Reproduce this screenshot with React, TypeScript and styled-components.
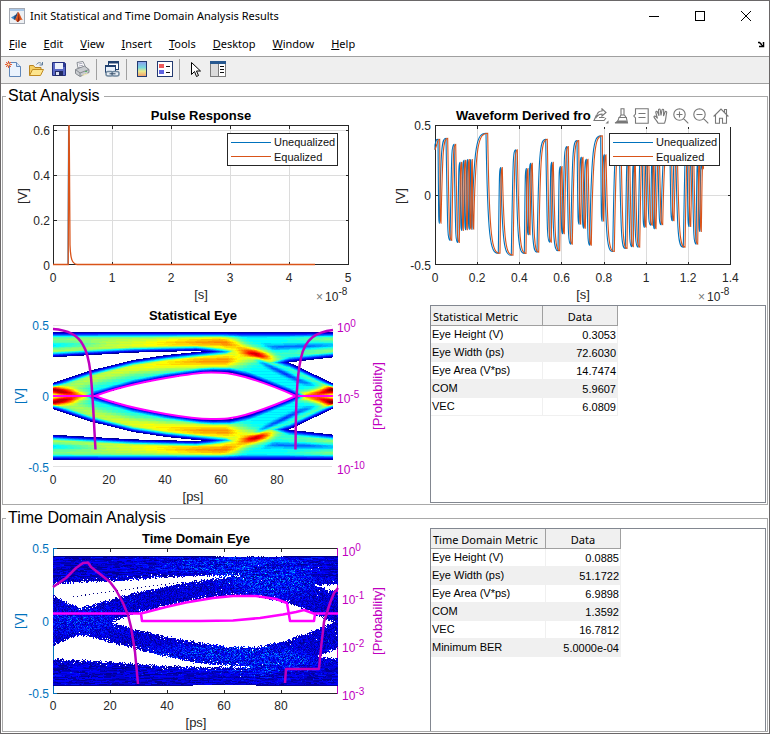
import React, { useMemo } from "react";
import styled, { createGlobalStyle } from "styled-components";

/* ---------- numeric helpers ---------- */

type Point = [number, number];

const lerp = (points: Point[], x: number): number => {
  if (x <= points[0][0]) return points[0][1];
  for (let i = 1; i < points.length; i++) {
    const [x1, y1] = points[i];
    if (x <= x1) {
      const [x0, y0] = points[i - 1];
      return y0 + ((y1 - y0) * (x - x0)) / (x1 - x0);
    }
  }
  return points[points.length - 1][1];
};

const clamp = (v: number) => Math.max(0, Math.min(1, v));

const jet = (v: number): string => {
  const channel = (offset: number) =>
    Math.round(255 * clamp(1.5 - Math.abs(4 * v - offset)));
  return `rgb(${channel(3)},${channel(2)},${channel(1)})`;
};

const createRandom = (seed: number) => () => {
  seed = (seed + 0x6d2b79f5) | 0;
  let t = Math.imul(seed ^ (seed >>> 15), 1 | seed);
  t = (t + Math.imul(t ^ (t >>> 7), 61 | t)) ^ t;
  return ((t ^ (t >>> 14)) >>> 0) / 4294967296;
};

const gauss = (x: number, sigma: number) => Math.exp((-x * x) / (2 * sigma * sigma));

/* A density returns 0..1, or null where the bin is empty. */
type Density = (column: number, row: number) => number | null;

const LEVELS = 48;

const heatPaths = (columns: number, rows: number, density: Density) => {
  const paths: string[] = Array(LEVELS + 1).fill("");
  for (let r = 0; r < rows; r++) {
    let start = 0;
    let level = -1;
    for (let c = 0; c <= columns; c++) {
      const v = c < columns ? density(c, r) : null;
      const next = v === null ? -1 : Math.round(clamp(v) * LEVELS);
      if (next !== level || c === columns) {
        if (level >= 0) paths[level] += `M${start} ${r}h${c - start}v1h${start - c}z`;
        start = c;
        level = next;
      }
    }
  }
  return paths;
};

/* ---------- statistical eye density; profiles are in thirds of a bin ---------- */

const OUTER = 192;
const gapLeftTop: Point[] = [[0, 116], [240, 130], [430, 135], [470, 131], [560, 118], [620, 80], [700, -200]];
const gapLeftBottom: Point[] = [[0, 40], [110, 76], [240, 108], [340, 123], [430, 132], [520, 141], [620, 190], [700, 400]];
const gapRightTop: Point[] = [[520, -300], [640, 82], [710, 101], [840, 116]];
const gapRightBottom: Point[] = [[520, 400], [640, 120], [710, 100], [840, 38]];
const eyeOpening: Point[] = [
  [0, -70], [60, -32], [100, -12], [125, 0], [240, 33], [340, 53], [440, 68], [480, 71],
  [530, 70], [590, 55], [650, 32], [730, 0], [760, -14], [800, -34], [840, -70],
];

interface Band { center: Point[]; amp: Point[]; sigma: number }

const bands: Band[] = [
  {
    center: [[0, 168], [400, 164], [500, 162], [550, 154], [620, 122], [680, 98], [740, 68], [840, 22]],
    amp: [[0, 0.12], [300, 0.2], [420, 0.28], [520, 0.37], [570, 0.2], [620, 0.1], [700, 0.04], [840, 0.12]],
    sigma: 15,
  },
  { center: [[0, 134], [300, 148], [440, 155]], amp: [[0, 0.15], [300, 0.12], [440, 0.06], [520, 0]], sigma: 10 },
  {
    center: [[0, 8], [60, 32], [140, 60], [240, 84], [340, 97], [440, 104], [520, 106], [580, 112], [620, 124], [680, 134], [840, 132]],
    amp: [[0, 0.05], [60, 0.16], [240, 0.22], [340, 0.27], [440, 0.34], [520, 0.36], [570, 0.2], [620, 0.08], [670, 0.03], [840, 0.14]],
    sigma: 17,
  },
  { center: [[640, 175], [840, 172]], amp: [[600, 0], [700, 0.02], [840, 0.12]], sigma: 9 },
  { center: [[600, 116], [660, 84], [740, 46], [780, 34]], amp: [[570, 0], [620, -0.16], [700, -0.2], [760, -0.14], [810, 0]], sigma: 6 },
  { center: [[600, 160], [660, 146], [840, 152]], amp: [[620, 0], [660, -0.14], [760, -0.2], [840, -0.14]], sigma: 6 },
  { center: [[0, 152], [160, 156]], amp: [[0, -0.12], [160, 0]], sigma: 6 },
  { center: [[0, 19], [50, 8], [80, 0]], amp: [[0, 0.54], [40, 0.46], [80, 0.36], [125, 0]], sigma: 10 },
  { center: [[760, 0], [800, 8], [840, 19]], amp: [[715, 0], [760, 0.36], [800, 0.46], [840, 0.54]], sigma: 10 },
];

const STAT_COLUMNS = 280;
const STAT_ROWS = 128;

const statDensity: Density = (column, row) => {
  const u = column * 3 + 1.5;
  const d = Math.abs(OUTER - (row * 3 + 1.5));
  const distance = Math.min(
    OUTER - d,
    d - lerp(eyeOpening, u),
    Math.max(d - lerp(gapLeftTop, u), lerp(gapLeftBottom, u) - d),
    Math.max(d - lerp(gapRightTop, u), lerp(gapRightBottom, u) - d),
  );
  if (distance < 0) return null;
  let v = 0.37 + 0.012 * Math.sin(d * 0.75);
  for (const band of bands) v += lerp(band.amp, u) * gauss(d - lerp(band.center, u), band.sigma);
  v += 0.34 * gauss(u - 615, 34) * gauss(d - 123 + (u - 615) * 0.22, 10);
  return Math.max(0.02, v * clamp(distance / 17));
};

/* ---------- time domain eye density ---------- */

interface Gap { upper: Point[]; lower: Point[]; from: number; to: number }

const timeGaps: Gap[] = [
  {
    from: 0, to: 560,
    upper: [[0, 85], [80, 79], [190, 75], [340, 64], [440, 60], [560, 59]],
    lower: [[0, 119], [80, 157], [140, 139], [240, 112], [340, 90], [440, 73], [560, 59]],
  },
  {
    from: 0, to: 590,
    upper: [[0, 269], [80, 236], [140, 250], [240, 277], [340, 302], [440, 323], [590, 333]],
    lower: [[0, 309], [80, 312], [240, 323], [340, 330], [460, 334], [590, 332]],
  },
  {
    from: 175, to: 845,
    upper: [[175, 199], [220, 182], [270, 167], [340, 149], [440, 129], [540, 119], [610, 121], [700, 140], [760, 162], [800, 182], [845, 199]],
    lower: [[175, 199], [240, 219], [340, 242], [440, 260], [540, 273], [610, 274], [690, 257], [760, 232], [845, 199]],
  },
  { from: 785, to: 856, upper: [[785, 88], [856, 85]], lower: [[785, 88], [856, 110]] },
  { from: 795, to: 856, upper: [[795, 303], [856, 276]], lower: [[795, 303], [856, 309]] },
];

const hotSpots: [number, number, number, number][] = [
  [470, 28, 120, 18], [710, 70, 50, 22], [70, 197, 80, 26], [710, 315, 50, 16],
  [620, 35, 100, 26], [640, 90, 80, 30], [470, 290, 140, 20], [600, 320, 80, 30],
];

const TIME_COLUMNS = 285;
const TIME_ROWS = 130;

const createTimeDensity = (): Density => {
  const random = createRandom(41);
  let streak = 0;
  return (column, row) => {
    const u = column * 3 + 1.5;
    const y = row * 3 + 1.5;
    const jitter = (random() - 0.5) * 7;
    const speck = random();
    for (const gap of timeGaps) {
      if (u < gap.from || u > gap.to) continue;
      const inside = Math.min(y - lerp(gap.upper, u), lerp(gap.lower, u) - y) + jitter;
      if (inside > 0) {
        const trackY = 122 - ((u - 60) * 35) / 260;
        const onTrack = u > 55 && u < 380 && Math.abs(y - trackY) < 1.6 && column % 4 === 0;
        return onTrack ? 0.01 : null;
      }
      if (inside > -9 && speck > 0.93) return null;
    }
    if (y < 4) return u > 490 && u < 690 && speck > 0.2 ? null : 0.01;
    if (y > 386) return u > 420 && u < 610 ? null : 0.02;
    if (speck > 0.998 && u > 500) return null;
    const outerBand = y < 64 || y > 326;
    if (!outerBand || random() > 0.72) streak = random();
    let heat = 0;
    for (const [hx, hy, sx, sy] of hotSpots) heat += gauss(u - hx, sx) * gauss(y - hy, sy);
    const bright = random();
    return 0.01 + streak * 0.13 + Math.min(1, heat) * bright * bright * 0.17 + (bright > 0.985 ? 0.07 : 0);
  };
};

/* ---------- waveform: [time position, level] at the end of every bit run ---------- */

const waveRuns: Point[] = [
  [0, 135], [9, 118], [13, 370], [33, 115], [45, 422], [57, 133], [68, 428], [75, 187], [80, 392],
  [87, 181], [92, 390], [98, 179], [103, 388], [107, 179], [111, 388], [153, 100], [190, 460],
  [197, 203], [229, 466], [242, 150], [268, 461], [274, 206], [280, 405], [287, 190], [306, 457],
  [332, 118], [344, 427], [350, 187], [369, 453], [376, 200], [383, 402], [395, 140], [407, 433],
  [426, 122], [432, 373], [439, 172], [446, 385], [454, 178], [464, 436], [497, 108], [501, 364],
  [508, 165], [533, 455], [553, 128], [571, 446], [579, 176], [590, 441], [596, 190], [609, 442],
  [621, 140], [628, 382], [636, 170], [647, 376], [652, 180], [658, 387], [668, 160], [678, 375],
  [704, 120], [712, 363], [722, 150], [745, 442], [756, 150], [762, 380], [771, 160], [783, 433],
  [789, 185], [794, 395], [800, 190], [801, 208],
];

const wavePath = (delay: number): string => {
  const px = (x: number) => ((x + delay) / 3).toFixed(1);
  const py = (y: number) => ((y - 77) / 3).toFixed(1);
  let d = `M0 ${py(150)}L${px(0)} ${py(waveRuns[0][1])}`;
  for (let i = 1; i < waveRuns.length; i++) {
    const [x0, y0] = waveRuns[i - 1];
    const [x1, y1] = waveRuns[i];
    const run = x1 - x0;
    d += `C${px(x0 + Math.min(run * 0.5, 5))} ${py(y0 + (y1 - y0) * 0.9)} ${px(x0 + run * 0.35)} ${py(y1)} ${px(x1)} ${py(y1)}`;
  }
  return d;
};

/* ---------- page frame ---------- */

const GlobalStyle = createGlobalStyle`
  *, *::before, *::after { box-sizing: border-box; }
  body { margin: 0; background: #fff; font-family: "Liberation Sans", Arial, sans-serif; color: #000; }
  button { font: inherit; color: inherit; border: 0; background: none; padding: 0; }
`;

const uiFont = `"Noto Sans", "Open Sans", sans-serif`;

const WindowFrame = styled.div`
  display: flex;
  flex-direction: column;
  min-height: 100vh;
  background: #fff;
  border: 1px solid #6a6768;
`;

const TitleBar = styled.header`
  display: flex;
  align-items: center;
  height: 30px;
  padding-left: 8px;
`;

const WindowTitle = styled.h1`
  flex: 1;
  margin: 0 0 0 5px;
  font: 400 11px/16px ${uiFont};
`;

const CaptionButton = styled.button`
  display: grid;
  place-items: center;
  width: 46px;
  height: 30px;
`;

const MenuBar = styled.nav`
  display: flex;
  align-items: center;
  gap: 1px;
  height: 25px;
  padding: 0 4px 0 0;
`;

const MenuItem = styled.button`
  padding: 0 8px;
  font: 400 11px/16px ${uiFont};
  &::first-letter { text-decoration: underline; }
`;

const DockButton = styled.button`
  display: grid;
  margin-left: auto;
`;

const ToolBar = styled.div`
  display: flex;
  align-items: center;
  height: 28px;
  padding-bottom: 2px;
  border-top: 1px solid #a0a0a0;
  border-bottom: 1px solid #a0a0a0;
  background: #efefef;
`;

const ToolButton = styled.button`
  display: grid;
  place-items: center;
  width: 23px;
  height: 22px;
`;

const ToolDivider = styled.span`
  width: 1px;
  height: 21px;
  margin: 0 3px;
  background: #a0a0a0;
`;

const Panels = styled.main`
  display: flex;
  flex-direction: column;
  gap: 4px;
  padding: 3px 1px 1px;
`;

const Panel = styled.fieldset`
  min-width: 0;
  margin: 0;
  padding: 0;
  border: 1px solid #a9a9a9;
`;

const PanelTitle = styled.legend`
  margin-left: 3px;
  padding: 0 4px 0 2px;
  font-size: 16px;
  line-height: 18px;
`;

const PanelRow = styled.div`
  display: flex;
`;

const Cell = styled.div<{ $share: number }>`
  position: relative;
  flex: ${(p) => p.$share} 1 0;
  min-width: 0;
`;

const ChartSvg = styled.svg`
  display: block;
  width: 100%;
  height: auto;
  font-family: "Liberation Sans", Arial, sans-serif;
`;

const Title = styled.text`
  font-size: 13px;
  font-weight: 700;
  fill: #000;
`;

const Tick = styled.text`
  font-size: 12px;
`;

const Label = styled.text`
  font-size: 13px;
  text-anchor: middle;
`;

const Exponent = styled.tspan`
  font-size: 10px;
`;

const LegendText = styled.text`
  font-size: 11px;
  fill: #111;
`;

const AxesTools = styled.div`
  position: absolute;
  top: 0;
  right: 36px;
  display: flex;
  height: 22px;
  background: #fff;
`;

const AxesButton = styled.button`
  display: grid;
  place-items: center;
  width: 20px;
  height: 22px;
`;

const TableFrame = styled.div<{ $open?: boolean }>`
  height: ${(p) => (p.$open ? "calc(100% - 1px)" : "calc(100% - 3px)")};
  margin: ${(p) => (p.$open ? "1px 1px 0 0" : "2px 1px 1px 0")};
  border: 1px solid #828790;
  border-bottom-width: ${(p) => (p.$open ? 0 : 1)}px;
`;

const MetricTable = styled.table`
  border-collapse: separate;
  border-spacing: 0;
  table-layout: fixed;
  font-size: 11px;
`;

const HeadCell = styled.th<{ $width: number; $center?: boolean }>`
  width: ${(p) => p.$width}px;
  height: 20px;
  padding: 2px 2px 0;
  border-right: 1px solid #a0a0a0;
  border-bottom: 1px solid #a0a0a0;
  background: #f0f0f0;
  font: 400 11px/16px ${uiFont};
  text-align: ${(p) => (p.$center ? "center" : "left")};
  white-space: nowrap;
`;

const BodyRow = styled.tr`
  height: 18px;
  &:nth-child(even) { background: #f0f0f0; }
`;

const NameCell = styled.th`
  padding: 0 1px 1px;
  border-right: 1px solid #f0f0f0;
  border-bottom: 1px solid #f0f0f0;
  font-weight: 400;
  line-height: 15px;
  text-align: left;
`;

const ValueCell = styled.td`
  padding: 1px 1px 0;
  border-right: 1px solid #f0f0f0;
  border-bottom: 1px solid #f0f0f0;
  line-height: 16px;
  text-align: right;
`;

/* ---------- icons ---------- */

const Icon = ({ size = 16, children }: { size?: number; children: React.ReactNode }) => (
  <svg width={size} height={size} viewBox={`0 0 ${size} ${size}`} fill="none" aria-hidden="true">
    {children}
  </svg>
);

const MatlabIcon = () => (
  <Icon>
    <rect x=".5" y=".5" width="15" height="15" fill="#eef0f3" stroke="#a5aab3" />
    <rect x="1" y="1" width="14" height="2" fill="#a9c7e8" />
    <path d="M2 9.500l3.500-2 2 2.500-2 2z" fill="#3b86c8" />
    <path d="M5.500 7.500C7.500 7 8 4 9 4c-.5 3-1 5-3.500 8L5 10z" fill="#274a78" />
    <path d="M9 4c1.500 0 2.500 5.500 5 8-1.500-.5-2.500-.5-3.500.5-1 1-1.500 1.500-2.500 1.500-.5-1.500-1.500-2-2.500-2C8 10 8 6 9 4z" fill="#d9541c" />
    <path d="M9 4c.8 2 .5 6-1 10 1 0 1.500-.5 2.500-1.500C10.500 9 10 6 9 4z" fill="#8c2312" />
  </Icon>
);

const NewIcon = () => (
  <Icon>
    <path d="M4.500 1.500h7l4 4v10h-11z" fill="#eaf3fd" stroke="#5f86b8" />
    <path d="M11.500 1.500v4h4" fill="#cfe0f5" stroke="#5f86b8" />
    <path d="M3.500 0v7M0 3.500h7M1 1l5 5M6 1L1 6" stroke="#e8663c" />
    <circle cx="3.500" cy="3.500" r="1.600" fill="#fff2b0" stroke="#d6452a" />
  </Icon>
);

const OpenIcon = () => (
  <Icon>
    <path d="M1.500 14.500v-10h4l1.500 2h6v3" fill="#f6cf63" stroke="#b98420" />
    <path d="M1.500 14.500l3-6h11l-3 6z" fill="#fde58d" stroke="#c08a22" />
    <path d="M8.500 3.500c2-2.500 4-2.500 5.500 0M14.500 1v3h-3" stroke="#5f7d9c" />
  </Icon>
);

const SaveIcon = () => (
  <Icon>
    <path d="M1.500 1.500h12l1 1v12h-13z" fill="#5a68c4" stroke="#232f80" />
    <rect x="4" y="2" width="8" height="6" fill="#eef2fb" />
    <path d="M12 2h2v4h-2z" fill="#2d3b96" />
    <rect x="4" y="10" width="8" height="5" fill="#222b63" />
    <rect x="5" y="11" width="3" height="3" fill="#dfe3f2" />
  </Icon>
);

const PrintIcon = () => (
  <Icon>
    <path d="M4 7L3 1.500 9 .5 11.500 6z" fill="#fff" stroke="#8a8f96" />
    <path d="M4.500 3l4-.8M5 5l4-.8" stroke="#aab" />
    <path d="M1.500 8.500l9-3.500 4.500 3.500v3L6 15.500l-4.500-3z" fill="#c9ccd0" stroke="#85898f" />
    <path d="M1.500 8.500L6 12l9-3.500M6 12v3" stroke="#85898f" />
    <path d="M8 14l5-2 1 1-5 2z" fill="#f1e9b8" />
    <rect x="11" y="10" width="2" height="1" fill="#58b368" />
  </Icon>
);

const LinkPlotIcon = () => (
  <Icon>
    <rect x="4.500" y=".5" width="10" height="8" fill="#fff" stroke="#20406f" />
    <path d="M4 1.500h11" stroke="#20406f" strokeWidth="2" />
    <rect x="1.500" y="4.500" width="10" height="7" fill="#e8f0fa" stroke="#20406f" />
    <path d="M1 5h11" stroke="#20406f" strokeWidth="2" />
    <rect x="2" y="10.500" width="7" height="4.500" rx="2" fill="#e6edf5" stroke="#6f879d" strokeWidth="1.500" />
    <rect x="8" y="10.500" width="7" height="4.500" rx="2" fill="#e6edf5" stroke="#6f879d" strokeWidth="1.500" />
    <path d="M5.500 12.800h6" stroke="#2c4560" />
  </Icon>
);

const ColorbarIcon = () => (
  <Icon>
    <defs>
      <linearGradient id="colorbar" x2="0" y2="1">
        <stop offset="0" stopColor="#8c9cf0" />
        <stop offset=".4" stopColor="#79d9dc" />
        <stop offset=".65" stopColor="#e9ea8c" />
        <stop offset="1" stopColor="#f29a6c" />
      </linearGradient>
    </defs>
    <rect x="3.500" y=".5" width="9" height="15" fill="url(#colorbar)" stroke="#233a70" />
  </Icon>
);

const LegendIcon = () => (
  <Icon>
    <rect x=".5" y=".5" width="15" height="15" fill="#fff" stroke="#233a70" />
    <rect x="2" y="3" width="5" height="4" fill="#ee5a5a" />
    <rect x="2" y="9" width="5" height="4" fill="#5f63e0" />
    <path d="M9 5.500h4M9 11.500h4" stroke="#111" />
  </Icon>
);

const PointerIcon = () => (
  <Icon>
    <path d="M4.500 1.500v12l3-3 2 5 2-1-2-4.500h4z" fill="#fff" stroke="#000" />
  </Icon>
);

const InspectorIcon = () => (
  <Icon>
    <rect x=".5" y=".5" width="15" height="15" fill="#dcdcdc" stroke="#7c7c7c" />
    <rect x="0" y="0" width="16" height="3" fill="#27588f" />
    <rect x="9" y="3" width="6" height="12" fill="#fff" />
    <path d="M8.500 3v12" stroke="#7c7c7c" />
    <path d="M10 5.500h4M10 8.500h4M10 11.500h4" stroke="#111" />
  </Icon>
);

const tools: { name: string; icon: React.ReactNode; divider?: boolean }[] = [
  { name: "New Figure", icon: <NewIcon /> },
  { name: "Open File", icon: <OpenIcon /> },
  { name: "Save Figure", icon: <SaveIcon /> },
  { name: "Print Figure", icon: <PrintIcon />, divider: true },
  { name: "Link Plot", icon: <LinkPlotIcon />, divider: true },
  { name: "Insert Colorbar", icon: <ColorbarIcon /> },
  { name: "Insert Legend", icon: <LegendIcon />, divider: true },
  { name: "Edit Plot", icon: <PointerIcon /> },
  { name: "Open Property Inspector", icon: <InspectorIcon /> },
];

const axesTools: { name: string; icon: React.ReactNode }[] = [
  {
    name: "Export",
    icon: (
      <>
        <path d="M3.500 7L1 12.500h10L13 10M6 9.500h5.500" />
        <path d="M3.500 9C4 4.500 6.500 3 9 3V.8L13 4.500 9 8V6C7 6 5 7 3.500 9z" />
        <path d="M12.500 15.500h3v-3z" fill="#777" stroke="none" />
      </>
    ),
  },
  {
    name: "Brush",
    icon: (
      <>
        <path d="M8 .8h3V7H8zM8 7L6.500 9.500h6.500L11.500 7" />
        <path d="M6 9.500h7.300L14.500 15H2C4.500 14 5.500 12 6 9.500z" />
        <path d="M5 12.500h8.500L14.500 15H2z" fill="#777" stroke="none" />
      </>
    ),
  },
  { name: "Data Tips", icon: <path d="M2.500.8h12.700v14.500H2.500V10L.8 8l1.700-2zM5.500 5.500h7M5.500 9.500h7" /> },
  {
    name: "Pan",
    icon: (
      <path d="M5 15.300c-.5-2-3.500-4.500-4-6.300-.2-1 1.300-1.300 2-.3L4.500 10.500 2.800 4.500c-.3-1.300 1.200-1.700 1.700-.5L6 7.800 5.500 2c0-1.300 1.600-1.300 1.800 0L8 7.500 9 2c.2-1.200 1.800-1 1.700.2L10.500 8l1.600-4c.5-1.100 1.900-.6 1.600.6-.7 2.400-.7 5.400-1.200 7.400l-1 3.300M5 15.300h6.500" />
    ),
  },
  { name: "Zoom In", icon: <path d="M6.500.8a5.700 5.700 0 100 11.400 5.700 5.700 0 000-11.400zM10.600 10.600l4.700 4.700M3.500 6.500h6M6.500 3.500v6" /> },
  { name: "Zoom Out", icon: <path d="M6.500.8a5.700 5.700 0 100 11.400 5.700 5.700 0 000-11.400zM10.600 10.600l4.700 4.700M3.500 6.500h6" /> },
  { name: "Restore View", icon: <path d="M.6 8.500L8 1l7.400 7.500M2.500 7v8.300h4v-5h3v5h4V7M11.500 4V1.500h2V6" /> },
];

/* ---------- chart parts ---------- */

const INK = "#262626";
const BLUE = "#0072bd";
const ORANGE = "#d95319";
const PURPLE = "#bf00bf";
const MAGENTA = "#ff00ff";

interface FrameProps { x: number; y: number; w: number; h: number; xs: number[]; ys: number[] }

const GridFrame = ({ x, y, w, h, xs, ys }: FrameProps) => (
  <g fill="none" shapeRendering="crispEdges">
    <path
      stroke="#dcdcdc"
      d={xs.map((v) => `M${x + v} ${y}v${h}`).join("") + ys.map((v) => `M${x} ${y + v}h${w}`).join("")}
    />
    <path
      stroke={INK}
      d={
        `M${x} ${y}h${w}v${h}h${-w}z` +
        xs.map((v) => `M${x + v} ${y}v3M${x + v} ${y + h}v-3`).join("") +
        ys.map((v) => `M${x} ${y + v}h3M${x + w} ${y + v}h-3`).join("")
      }
    />
  </g>
);

interface TickSpec { at: number; text: string }

const XTicks = ({ y, items }: { y: number; items: TickSpec[] }) => (
  <g fill={INK} textAnchor="middle">
    {items.map((t) => <Tick key={t.text} x={t.at} y={y}>{t.text}</Tick>)}
  </g>
);

const YTicks = ({ x, items, color = INK }: { x: number; items: TickSpec[]; color?: string }) => (
  <g fill={color} textAnchor="end">
    {items.map((t) => <Tick key={t.text} x={x} y={t.at}>{t.text}</Tick>)}
  </g>
);

const PowerTicks = ({ x, items }: { x: number; items: TickSpec[] }) => (
  <g fill={PURPLE}>
    {items.map((t) => (
      <Tick key={t.text} x={x} y={t.at}>10<Exponent dy={-5}>{t.text}</Exponent></Tick>
    ))}
  </g>
);

const SideLabel = ({ x, y, color = INK, children }: { x: number; y: number; color?: string; children: string }) => (
  <Label transform={`translate(${x} ${y}) rotate(-90)`} fill={color}>{children}</Label>
);

const Scale = ({ x, y }: { x: number; y: number }) => (
  <Tick x={x} y={y} fill={INK}>
    <tspan fill="#777">×</tspan><tspan dx={2}>10</tspan><Exponent dy={-6}>-8</Exponent>
  </Tick>
);

const ChartLegend = ({ x, y }: { x: number; y: number }) => (
  <g transform={`translate(${x} ${y})`}>
    <rect x=".5" y=".5" width="110" height="32" fill="#fff" stroke={INK} shapeRendering="crispEdges" />
    <path d="M4 9.500h40" stroke={BLUE} shapeRendering="crispEdges" />
    <path d="M4 23.500h40" stroke={ORANGE} shapeRendering="crispEdges" />
    <LegendText x="47" y="13">Unequalized</LegendText>
    <LegendText x="47" y="28">Equalized</LegendText>
  </g>
);

const HeatMap = ({ x, y, columns, rows, density }: { x: number; y: number; columns: number; rows: number; density: () => Density }) => {
  const paths = useMemo(() => heatPaths(columns, rows, density()), [columns, rows, density]);
  return (
    <g transform={`translate(${x} ${y})`} shapeRendering="crispEdges">
      {paths.map((d, i) => (d ? <path key={i} d={d} fill={jet(i / LEVELS)} /> : null))}
    </g>
  );
};

const createStatDensity = () => statDensity;

const PulseChart = () => (
  <ChartSvg viewBox="0 0 377 198" role="img" aria-label="Pulse Response">
    <Title x="198" y="15" textAnchor="middle">Pulse Response</Title>
    <GridFrame x={50.5} y={20.5} w={295} h={139} xs={[59, 118, 177, 236]} ys={[5, 50, 95]} />
    <path d="M50 159.500H65L65.500 20.500" fill="none" stroke={BLUE} />
    <path d="M50 159.500H65.200L65.800 21 66.200 21 67 140C67.500 154 69 158.500 74 159.500H312" fill="none" stroke={ORANGE} strokeWidth="1.300" />
    <YTicks x={47} items={[{ at: 30, text: "0.6" }, { at: 75, text: "0.4" }, { at: 120, text: "0.2" }, { at: 165, text: "0" }]} />
    <XTicks y={177} items={[0, 1, 2, 3, 4, 5].map((n) => ({ at: 50 + n * 59, text: String(n) }))} />
    <SideLabel x={24} y={91}>[V]</SideLabel>
    <Label x="198" y="194" fill={INK}>[s]</Label>
    <Scale x={313} y={196} />
    <ChartLegend x={224} y={28} />
  </ChartSvg>
);

const WaveformChart = () => (
  <ChartSvg viewBox="0 0 387 198" role="img" aria-label="Waveform Derived from Pulse Response">
    <Title x="76" y="15">Waveform Derived from Pulse Response</Title>
    <GridFrame x={55.5} y={20.5} w={295} h={139} xs={[42, 84, 126, 169, 211, 253]} ys={[70]} />
    <g transform="translate(55 20.500)" fill="none" strokeWidth="1.100">
      <path d={wavePath(0)} stroke={BLUE} />
      <path d={wavePath(5)} stroke={ORANGE} />
    </g>
    <YTicks x={51} items={[{ at: 25, text: "0.5" }, { at: 95, text: "0" }, { at: 165, text: "-0.5" }]} />
    <XTicks
      y={177}
      items={["0", "0.2", "0.4", "0.6", "0.8", "1", "1.2", "1.4"].map((text, i) => ({ at: 55 + i * 42.2, text }))}
    />
    <SideLabel x={25} y={91}>[V]</SideLabel>
    <Label x="203" y="194" fill={INK}>[s]</Label>
    <Scale x={318} y={196} />
    <ChartLegend x={229} y={28} />
  </ChartSvg>
);

const StatEyeChart = () => (
  <ChartSvg viewBox="0 0 427 201" role="img" aria-label="Statistical Eye">
    <Title x="190" y="17" textAnchor="middle">Statistical Eye</Title>
    <path d="M50 22.500h279M50 163.500h279" stroke="#e2e2e2" shapeRendering="crispEdges" />
    <HeatMap x={50} y={29} columns={STAT_COLUMNS} rows={STAT_ROWS} density={createStatDensity} />
    <g transform="translate(50 93)" fill="none" stroke={MAGENTA} strokeWidth="2">
      <path d="M0 0H42C60-7 90-14 113-18S145-23.500 158-23.500 178-23 192-19 225-8 243 0H280" />
      <path d="M42 0C60 7 90 14 113 18S145 23 158 23 178 23 192 19 225 8 243 0" />
    </g>
    <g transform="translate(50 93)" fill="none" stroke={PURPLE} strokeWidth="2.500">
      <path d="M0-67C15-66 25-61 30-51 39-37 39-5 42.500 53.500" />
      <path d="M280-66C264-64 252-58 248-38 243-16 243 15 242.500 53.500" />
    </g>
    <YTicks x={46} color={BLUE} items={[{ at: 27, text: "0.5" }, { at: 98, text: "0" }, { at: 169, text: "-0.5" }]} />
    <PowerTicks x={334} items={[{ at: 29, text: "0" }, { at: 100, text: "-5" }, { at: 171, text: "-10" }]} />
    <XTicks y={181} items={[0, 20, 40, 60, 80].map((n) => ({ at: 50 + n * 2.8, text: String(n) }))} />
    <SideLabel x={21} y={93} color={BLUE}>[V]</SideLabel>
    <SideLabel x={379} y={93} color={PURPLE}>[Probability]</SideLabel>
    <Label x="190" y="198" fill={INK}>[ps]</Label>
  </ChartSvg>
);

const TimeEyeChart = () => (
  <ChartSvg viewBox="0 0 427 204" role="img" aria-label="Time Domain Eye">
    <Title x="193" y="16" textAnchor="middle">Time Domain Eye</Title>
    <g fill="none" shapeRendering="crispEdges">
      <path d="M50 21.500h285M50 166.500h285M107.500 22v3M164.500 22v3M221.500 22v3M278.500 22v3M107.500 166v-3M164.500 166v-3M221.500 166v-3M278.500 166v-3" stroke={INK} />
      <path d="M50.500 21v146M50 21.500h4M50 166.500h4" stroke={BLUE} />
      <path d="M334.500 21v146" stroke={PURPLE} />
    </g>
    <HeatMap x={50} y={29} columns={TIME_COLUMNS} rows={TIME_ROWS} density={createTimeDensity} />
    <g transform="translate(50 0)" fill="none" strokeLinejoin="round">
      <path
        d="M0 86.500H88L113 80 133 75.500 160 71 180 69 203 69 223 72 234 76 237 94H261L262 87 251 83 243 85 230 87.500 207 91 180 93.500 147 94H89L88 86.500M261 86.500H285"
        stroke={MAGENTA}
        strokeWidth="2.500"
      />
      <path
        d="M0 60L13 51 23 41 30 36 35 35.500 38 40 47 47 57 55 63 63 70 76 75 88 78 100 82 125 85 157"
        stroke={PURPLE}
        strokeWidth="2.500"
      />
      <path d="M232 156L233 142H266L268 121 271 95 277 76 281 66 285 61" stroke={PURPLE} strokeWidth="2.500" />
    </g>
    <YTicks x={46} color={BLUE} items={[{ at: 26, text: "0.5" }, { at: 99, text: "0" }, { at: 171, text: "-0.5" }]} />
    <PowerTicks x={339} items={[{ at: 29, text: "0" }, { at: 77, text: "-1" }, { at: 125, text: "-2" }, { at: 173, text: "-3" }]} />
    <XTicks y={183} items={[0, 20, 40, 60, 80].map((n) => ({ at: 50 + n * 2.85, text: String(n) }))} />
    <SideLabel x={21} y={94} color={BLUE}>[V]</SideLabel>
    <SideLabel x={379} y={94} color={PURPLE}>[Probability]</SideLabel>
    <Label x="193" y="200" fill={INK}>[ps]</Label>
  </ChartSvg>
);

/* ---------- tables ---------- */

interface MetricsProps { title: string; nameWidth: number; rows: [string, string][]; open?: boolean }

const Metrics = ({ title, nameWidth, rows, open }: MetricsProps) => (
  <TableFrame $open={open}>
    <MetricTable>
      <thead>
        <tr>
          <HeadCell scope="col" $width={nameWidth}>{title}</HeadCell>
          <HeadCell scope="col" $width={75} $center>Data</HeadCell>
        </tr>
      </thead>
      <tbody>
        {rows.map(([name, value]) => (
          <BodyRow key={name}>
            <NameCell scope="row">{name}</NameCell>
            <ValueCell>{value}</ValueCell>
          </BodyRow>
        ))}
      </tbody>
    </MetricTable>
  </TableFrame>
);

const statRows: [string, string][] = [
  ["Eye Height (V)", "0.3053"],
  ["Eye Width (ps)", "72.6030"],
  ["Eye Area (V*ps)", "14.7474"],
  ["COM", "5.9607"],
  ["VEC", "6.0809"],
];

const timeRows: [string, string][] = [
  ["Eye Height (V)", "0.0885"],
  ["Eye Width (ps)", "51.1722"],
  ["Eye Area (V*ps)", "6.9898"],
  ["COM", "1.3592"],
  ["VEC", "16.7812"],
  ["Minimum BER", "5.0000e-04"],
];

const menus = ["File", "Edit", "View", "Insert", "Tools", "Desktop", "Window", "Help"];

export default function App() {
  return (
    <>
      <GlobalStyle />
      <WindowFrame>
        <TitleBar>
          <MatlabIcon />
          <WindowTitle>Init Statistical and Time Domain Analysis Results</WindowTitle>
          <CaptionButton aria-label="Minimize">
            <Icon size={12}><path d="M1 6.500h10" stroke="#000" /></Icon>
          </CaptionButton>
          <CaptionButton aria-label="Maximize">
            <Icon size={12}><rect x="1.500" y="1.500" width="9" height="9" stroke="#000" /></Icon>
          </CaptionButton>
          <CaptionButton aria-label="Close">
            <Icon size={12}><path d="M1 1l10 10M11 1L1 11" stroke="#000" /></Icon>
          </CaptionButton>
        </TitleBar>
        <MenuBar>
          {menus.map((name) => <MenuItem key={name}>{name}</MenuItem>)}
          <DockButton aria-label="Dock">
            <Icon size={8}><path d="M1 2.500h1.500L6 6M6.500 2v4.500H2" stroke="#000" strokeWidth="1.500" /></Icon>
          </DockButton>
        </MenuBar>
        <ToolBar role="toolbar" aria-label="Figure">
          {tools.map((tool) => (
            <React.Fragment key={tool.name}>
              <ToolButton aria-label={tool.name}>{tool.icon}</ToolButton>
              {tool.divider && <ToolDivider />}
            </React.Fragment>
          ))}
        </ToolBar>
        <Panels>
          <Panel>
            <PanelTitle>Stat Analysis</PanelTitle>
            <PanelRow>
              <Cell $share={377}><PulseChart /></Cell>
              <Cell $share={387}>
                <WaveformChart />
                <AxesTools role="toolbar" aria-label="Axes">
                  {axesTools.map((tool) => (
                    <AxesButton key={tool.name} aria-label={tool.name}>
                      <Icon><g stroke="#777" strokeWidth="1.100">{tool.icon}</g></Icon>
                    </AxesButton>
                  ))}
                </AxesTools>
              </Cell>
            </PanelRow>
            <PanelRow>
              <Cell $share={427}><StatEyeChart /></Cell>
              <Cell $share={337}>
                <Metrics title="Statistical Metric" nameWidth={112} rows={statRows} />
              </Cell>
            </PanelRow>
          </Panel>
          <Panel>
            <PanelTitle>Time Domain Analysis</PanelTitle>
            <PanelRow>
              <Cell $share={427}><TimeEyeChart /></Cell>
              <Cell $share={337}>
                <Metrics title="Time Domain Metric" nameWidth={115} rows={timeRows} open />
              </Cell>
            </PanelRow>
          </Panel>
        </Panels>
      </WindowFrame>
    </>
  );
}
